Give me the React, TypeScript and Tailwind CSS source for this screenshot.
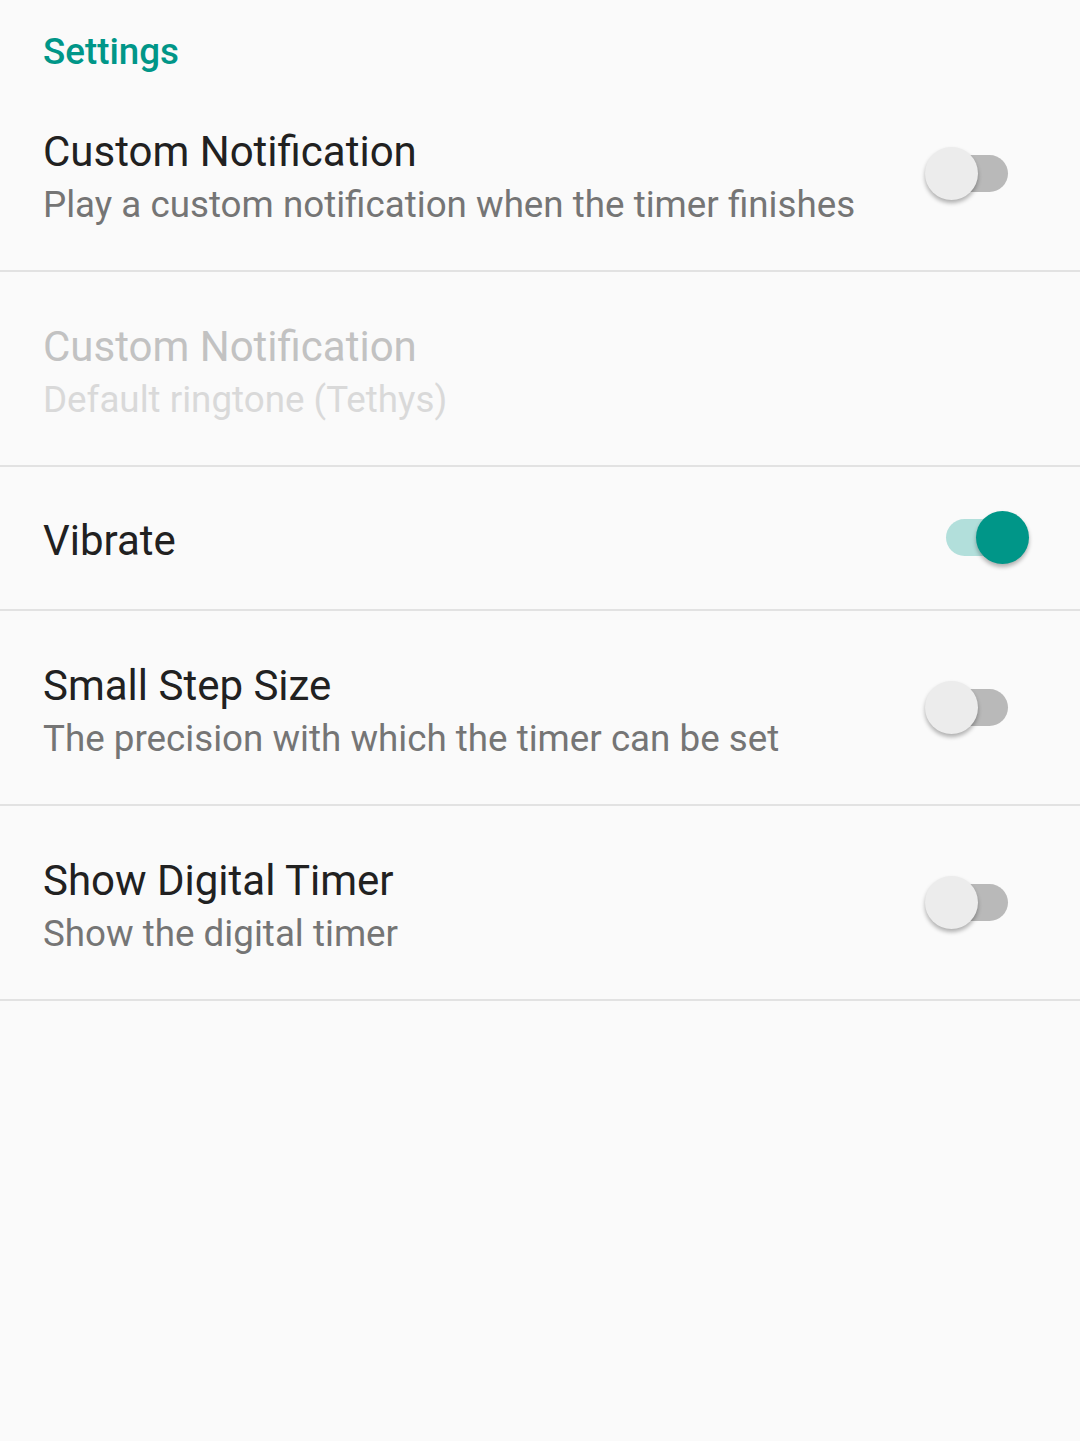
import React from "react";

type Pref = {
  title: string;
  summary?: string;
  toggle?: boolean;
  on?: boolean;
  disabled?: boolean;
};

const prefs: Pref[] = [
  {
    title: "Custom Notification",
    summary: "Play a custom notification when the timer finishes",
    toggle: true,
  },
  {
    title: "Custom Notification",
    summary: "Default ringtone (Tethys)",
    disabled: true,
  },
  { title: "Vibrate", toggle: true, on: true },
  {
    title: "Small Step Size",
    summary: "The precision with which the timer can be set",
    toggle: true,
  },
  {
    title: "Show Digital Timer",
    summary: "Show the digital timer",
    toggle: true,
  },
];

function Switch({ on }: { on?: boolean }) {
  return (
    <div className="relative w-[104px] h-[54px] shrink-0">
      <div
        className={
          on
            ? "absolute left-[21px] top-[8px] w-[62px] h-[37px] rounded-full bg-[#b2dfdb]"
            : "absolute left-[21px] top-[8px] w-[62px] h-[37px] rounded-full bg-[#b9b9b9]"
        }
      />
      <div
        className={
          on
            ? "absolute left-[51px] top-0 w-[53px] h-[53px] rounded-full bg-[#009688] shadow-[0_3px_4px_rgba(0,0,0,0.3)]"
            : "absolute left-0 top-0 w-[53px] h-[53px] rounded-full bg-[#ececec] shadow-[0_3px_4px_rgba(0,0,0,0.3)]"
        }
      />
    </div>
  );
}

function Row({ p }: { p: Pref }) {
  const twoLine = !!p.summary;
  return (
    <div
      className={
        twoLine
          ? "flex items-center justify-between h-[195px] pl-[43px] pr-[51px] border-b-2 border-[#e2e2e2]"
          : "flex items-center justify-between h-[144px] pl-[43px] pr-[51px] border-b-2 border-[#e2e2e2]"
      }
    >
      <div className={twoLine ? "flex flex-col pt-[9px]" : "flex flex-col pt-[5px]"}>
        <div
          className={
            p.disabled
              ? "text-[42px] leading-[54px] text-[#c2c2c2]"
              : "text-[42px] leading-[54px] text-[#212121]"
          }
        >
          {p.title}
        </div>
        {p.summary && (
          <div
            className={
              p.disabled
                ? "text-[36.75px] leading-[52px] text-[#d9d9d9]"
                : "text-[36.75px] leading-[52px] text-[#757575]"
            }
          >
            {p.summary}
          </div>
        )}
      </div>
      {p.toggle && <Switch on={p.on} />}
    </div>
  );
}

export default function App() {
  return (
    <div
      className="w-[1080px] h-[1441px] bg-[#fafafa]"
      style={{ fontFamily: "Roboto, 'Noto Sans', sans-serif" }}
    >
      <div className="h-[77px] pl-[43px] pt-[28px]">
        <div className="text-[36.75px] leading-[48px] font-medium text-[#009688]">
          Settings
        </div>
      </div>
      {prefs.map((p, i) => (
        <Row key={i} p={p} />
      ))}
    </div>
  );
}
